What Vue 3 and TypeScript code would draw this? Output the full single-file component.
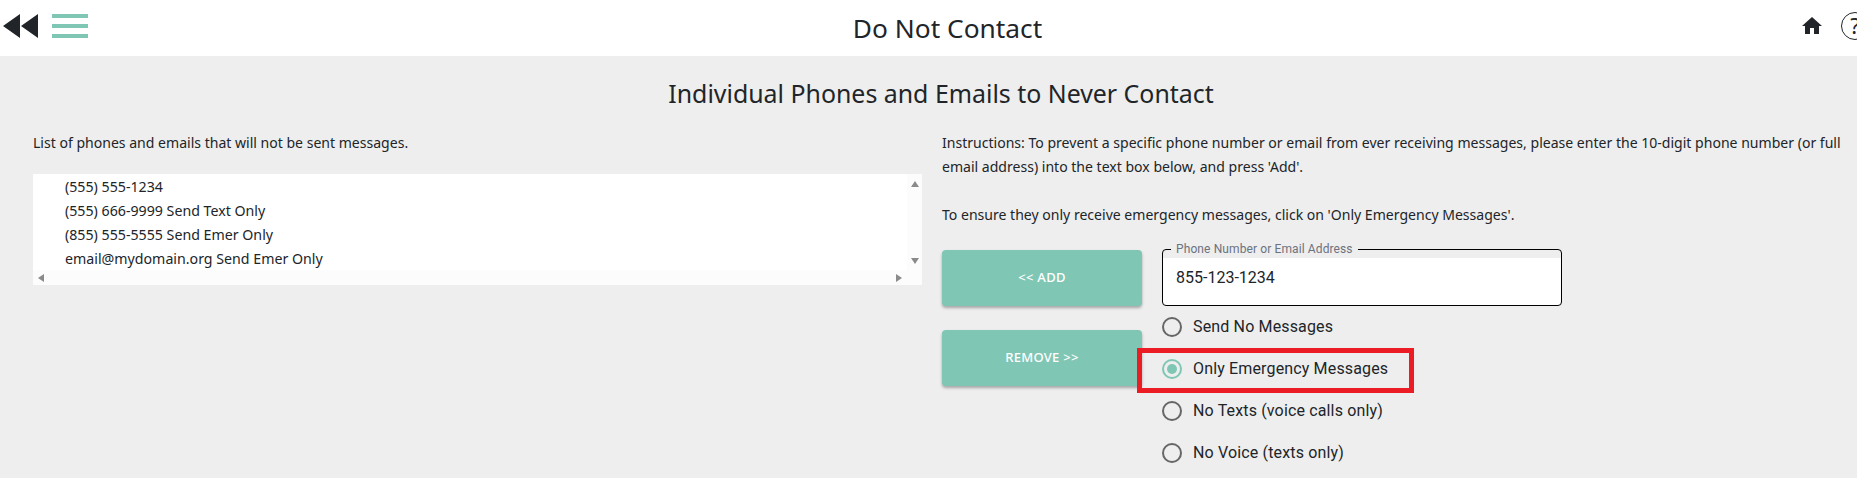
<script setup lang="ts">
import { ref } from 'vue';

const entries = [
  '(555) 555-1234',
  '(555) 666-9999 Send Text Only',
  '(855) 555-5555 Send Emer Only',
  'email@mydomain.org Send Emer Only',
];

const options = [
  'Send No Messages',
  'Only Emergency Messages',
  'No Texts (voice calls only)',
  'No Voice (texts only)',
];

const selected = ref('Only Emergency Messages');
const contact = ref('855-123-1234');
</script>

<template>
  <div class="page">
    <header class="topbar">
      <div class="topbar-left">
        <svg width="40" height="26" viewBox="0 0 40 26">
          <path d="M3 13 20 1V25ZM21 13 38 1V25Z" fill="#212529" />
        </svg>
        <div class="burger"><span></span><span></span><span></span></div>
      </div>
      <h1>Do Not Contact</h1>
      <div class="topbar-right">
        <svg width="24" height="24" viewBox="0 0 24 24">
          <path d="M10 20v-6h4v6h5v-8h3L12 3 2 12h3v8z" fill="#212529" />
        </svg>
        <span class="help">?</span>
      </div>
    </header>

    <main class="content">
      <h2>Individual Phones and Emails to Never Contact</h2>
      <div class="columns">
        <section class="left">
          <p class="intro">List of phones and emails that will not be sent messages.</p>
          <div class="listbox">
            <ul>
              <li v-for="entry in entries" :key="entry">{{ entry }}</li>
            </ul>
            <div class="vbar">
              <i class="arrow up"></i>
              <i class="arrow down"></i>
            </div>
            <div class="hbar">
              <i class="arrow lft"></i>
              <i class="arrow rgt"></i>
            </div>
            <div class="corner"></div>
          </div>
        </section>

        <section class="right">
          <p class="instructions">
            Instructions: To prevent a specific phone number or email from ever receiving messages, please enter the 10-digit phone number (or full email address) into the text box below, and press 'Add'.
          </p>
          <p class="instructions second">To ensure they only receive emergency messages, click on 'Only Emergency Messages'.</p>

          <div class="form">
            <div class="buttons">
              <button type="button">&lt;&lt; ADD</button>
              <button type="button">REMOVE &gt;&gt;</button>
            </div>
            <div class="fields">
              <fieldset class="field">
                <legend>Phone Number or Email Address</legend>
                <input v-model="contact" type="text" />
              </fieldset>
              <label
                v-for="opt in options"
                :key="opt"
                class="radio"
                :class="{ on: selected === opt, flagged: opt === 'Only Emergency Messages' }"
                @click="selected = opt"
              >
                <span class="dot"></span>
                <span class="radio-text">{{ opt }}</span>
              </label>
            </div>
          </div>
        </section>
      </div>
    </main>
  </div>
</template>

<style>
html,
body {
  overflow: hidden;
  background: #eee;
}
</style>

<style scoped>
/* the page is a bit wider than the window, the help icon gets cut at the right */
.page {
  width: 1895px;
  height: 478px;
  overflow: hidden;
  background: #eeeeee;
  color: #212529;
  font-family: "Noto Sans", "Open Sans", sans-serif;
}

.topbar {
  position: relative;
  height: 56px;
  padding-right: 26px;
  box-sizing: border-box;
  background: #fff;
  display: flex;
  align-items: center;
  justify-content: space-between;
}

.topbar-left {
  display: flex;
  align-items: center;
  gap: 12px;
  margin-top: -4px;
}

.burger {
  width: 36px;
  display: flex;
  flex-direction: column;
  gap: 6px;
}

.burger span {
  height: 4px;
  background: #7fc6b5;
}

h1 {
  position: absolute;
  left: 0;
  right: 0;
  margin: 0;
  text-align: center;
  font-size: 26.3px;
  font-weight: 400;
  pointer-events: none;
}

.topbar-right {
  display: flex;
  align-items: center;
  gap: 17px;
  margin-top: -4px;
}

.help {
  width: 28px;
  height: 28px;
  box-sizing: border-box;
  border: 1.5px solid #212529;
  border-radius: 50%;
  font-size: 22px;
  line-height: 25px;
  text-align: center;
}

.content {
  width: 1882px;
  padding-top: 20px;
}

h2 {
  margin: 0;
  text-align: center;
  font-size: 24.9px;
  line-height: 34px;
  font-weight: 400;
}

.columns {
  display: flex;
  padding: 0 25px 0 33px;
  gap: 20px;
  margin-top: 21px;
}

.left {
  width: 889px;
  flex: none;
}

.right {
  flex: 1;
}

p {
  margin: 0;
  font-size: 14.05px;
  line-height: 24px;
}

.listbox {
  margin-top: 19px;
  width: 889px;
  height: 111px;
  display: grid;
  grid-template-columns: 1fr 15px;
  grid-template-rows: 96px 15px;
  background: #fff;
}

ul {
  margin: 0;
  padding: 1px 0 0 32px;
  list-style: none;
  font-size: 14.2px;
  line-height: 24px;
  overflow: hidden;
}

.vbar,
.hbar,
.corner {
  background: #fcfcfc;
}

.vbar {
  display: flex;
  flex-direction: column;
  align-items: center;
  justify-content: space-between;
  padding: 7px 0 6px;
}

.hbar {
  display: flex;
  align-items: center;
  justify-content: space-between;
  padding: 0 5px;
}

.arrow {
  width: 0;
  height: 0;
  border: 4px solid transparent;
}

.up {
  border-top: 0;
  border-bottom: 6px solid #8a8a8a;
}

.down {
  border-bottom: 0;
  border-top: 6px solid #8a8a8a;
}

.lft {
  border-left: 0;
  border-right: 6px solid #8a8a8a;
}

.rgt {
  border-right: 0;
  border-left: 6px solid #8a8a8a;
}

.second {
  margin-top: 24px;
}

.form {
  display: flex;
  gap: 20px;
  margin-top: 22px;
}

.buttons {
  display: flex;
  flex-direction: column;
  gap: 24px;
  padding-top: 1px;
}

button {
  width: 200px;
  height: 56px;
  border: 0;
  border-radius: 4px;
  padding: 0 0 3px;
  background: #7fc6b5;
  color: #fff;
  font-family: inherit;
  font-size: 13px;
  font-weight: 500;
  letter-spacing: 0.3px;
  box-shadow: 0 2px 3px rgba(0, 0, 0, 0.3);
}

.fields {
  width: 400px;
  display: flex;
  flex-direction: column;
  font-family: Roboto, sans-serif;
}

.field {
  margin: -8px 0 0;
  height: 65px;
  padding: 0 12px 0 13px;
  border: 1px solid #000;
  border-radius: 4px;
  background: linear-gradient(transparent 8px, #fff 8px);
  box-sizing: border-box;
}

legend {
  padding: 0 5px;
  margin-left: -5px;
  font-size: 12px;
  letter-spacing: 0.11px;
  line-height: 16px;
  height: 16px;
  color: #6b7280;
}

input {
  width: 100%;
  margin-top: 9px;
  border: 0;
  outline: 0;
  padding: 0;
  background: transparent;
  font-family: inherit;
  font-size: 16px;
  line-height: 24px;
  color: #212529;
}

.radio {
  position: relative;
  height: 42px;
  display: flex;
  align-items: center;
  gap: 11px;
  font-size: 16px;
  letter-spacing: 0.15px;
}

.radio-text {
  margin-top: -1px;
}

.dot {
  width: 20px;
  height: 20px;
  box-sizing: border-box;
  border: 2px solid #666;
  border-radius: 50%;
  display: flex;
  align-items: center;
  justify-content: center;
}

.on .dot {
  border-color: #7fc6b5;
}

.on .dot::after {
  content: "";
  width: 10px;
  height: 10px;
  border-radius: 50%;
  background: #7fc6b5;
}

.flagged::before {
  content: "";
  position: absolute;
  left: -25px;
  top: 0;
  width: 277px;
  height: 45px;
  box-sizing: border-box;
  border: 5px solid #ec1c24;
  pointer-events: none;
}
</style>
